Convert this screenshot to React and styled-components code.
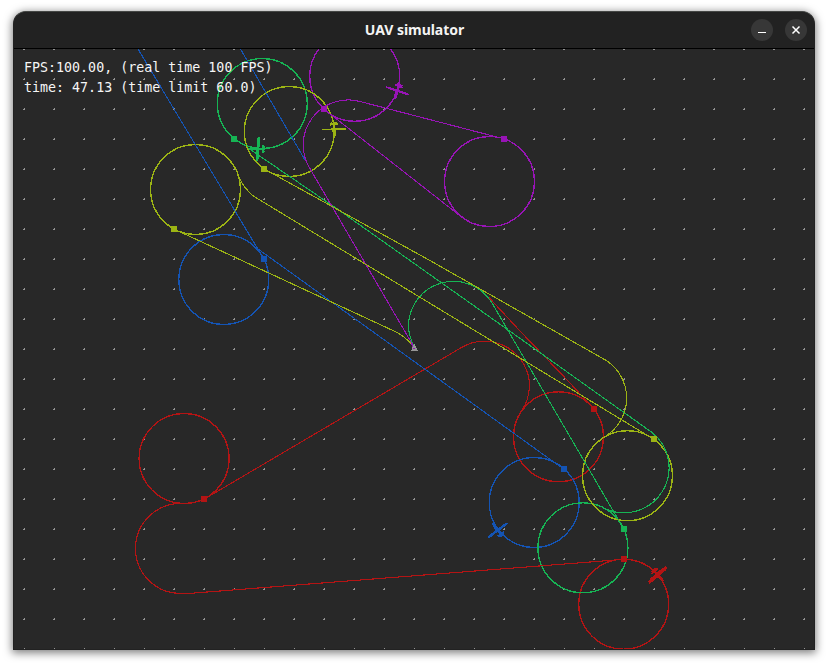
import React from "react";
import styled, { createGlobalStyle } from "styled-components";

const Global = createGlobalStyle`
  * { box-sizing: border-box; }
  body { margin: 0; background: #fff; overflow: hidden; }
`;

const Desktop = styled.main`
  width: 828px;
  height: 666px;
  padding: 11px 13px 16px;
  background: #fff;
`;

const Window = styled.section`
  width: 802px;
  height: 639px;
  display: flex;
  flex-direction: column;
  overflow: hidden;
  border: 1px solid #222;
  border-top-color: #454745;
  border-radius: 13px 13px 0 0;
  background: #282828;
  box-shadow: 0 2px 9px 1px rgba(0, 0, 0, 0.5);
`;

const TitleBar = styled.header`
  height: 37px;
  flex: none;
  display: grid;
  grid-template-columns: 1fr auto 1fr;
  align-items: center;
  padding-right: 7px;
  background: #222;
  border-bottom: 1px solid #000;
`;

const Title = styled.h1`
  grid-column: 2;
  margin: 0 0 0 8px;
  color: #f4f4f4;
  font: 700 14px/20px "Noto Sans", sans-serif;
  letter-spacing: -0.05px;
`;

const Controls = styled.div`
  display: flex;
  justify-content: flex-end;
  gap: 12px;
`;

const ControlButton = styled.button`
  width: 22px;
  height: 22px;
  padding: 0;
  border: 0;
  border-radius: 50%;
  background: #373737;
  svg { display: block; }
`;

const Viewport = styled.div`
  display: grid;
  width: 800px;
  height: 600px;
  flex: none;
  > * { grid-area: 1 / 1; }
`;

const Scene = styled.svg`
  display: block;
  shape-rendering: crispEdges;
`;

const Readout = styled.div`
  padding: 9px 0 0 10px;
  color: #f6f6f6;
  font: 13.3px/20px "DejaVu Sans Mono", monospace;
  letter-spacing: 0.01px;
  white-space: pre;
`;

const C = {
  red: "#b41414",
  blue: "#1454b4",
  green: "#16b454",
  yellow: "#9cb414",
  purple: "#9814b6",
};

const loops = [
  ["red", 184.1, 458.5], ["red", 558.5, 436.8], ["red", 623.7, 604.2],
  ["blue", 223.8, 279.5], ["blue", 534.2, 502.5],
  ["green", 262.3, 103.5], ["green", 582.9, 547.8],
  ["purple", 354.7, 76.3], ["purple", 489.5, 181.5],
  ["yellow", 289.3, 131.5], ["yellow", 195.5, 189.5], ["yellow", 627.5, 475.7],
];

const routes = [
  ["red", "M207 497.5L462 347.2A45 45 0 0 1 529.5 386Q529 400 521.5 411M489 297.5L520 331L570 383L592 407M184 503.5H180.5A45 45 0 0 0 180.5 593.5H188L622 559.5"],
  ["blue", "M138 49L262 256M240.5 49L305 160M256 247.5L553 461.5L564 469"],
  ["green", "M248 148L338 209.5L410 260.5L523 340.5L652 432.5A45 45 0 0 1 606 509M622 526L492 303A45 45 0 0 0 408.5 326.5Q409 336 414 347"],
  ["purple", "M327 111.5L459 215M493 136L359.7 101.4A45 45 0 0 0 309.3 167.5L414 347"],
  ["yellow", "M267 170.5L429 260L606 360.3A45 45 0 0 1 604.6 436.8M650 437L253.3 196Q244 188 240 179M176 230L394 331Q405 336 414 347"],
];

const waypoints = [
  ["red", 204, 499], ["red", 594, 409], ["red", 624, 559],
  ["blue", 264, 259], ["blue", 564, 469],
  ["green", 234, 139], ["green", 624, 529],
  ["purple", 324, 109], ["purple", 504, 139],
  ["yellow", 174, 229], ["yellow", 264, 169], ["yellow", 654, 439],
];

const planes = [
  ["yellow", 334, 129, -2, 1.8], ["green", 258.3, 149, 93, 2.8], ["purple", 397.5, 90.5, 19, 2.2],
  ["blue", 498, 530.5, 143, 2.4], ["red", 657.5, 574.5, -41, 4],
];

function Plane({ color, x, y, angle, weight }) {
  return (
    <g transform={`translate(${x} ${y}) rotate(${angle})`} fill="none" stroke={C[color]}>
      <path d="M-12 .3H12" strokeWidth={weight * 0.75} />
      <path d="M-9 .3H9" strokeWidth={weight} />
      <path d="M-4 -4.5H4M-3 -6.5L0 -4L3 -6.5" strokeWidth="1.8" />
      <path d="M0 -7V9" strokeWidth="2" />
      <path d="M0 -1V7" strokeWidth="3.2" />
    </g>
  );
}

export default function App() {
  return (
    <>
      <Global />
      <Desktop>
        <Window>
          <TitleBar>
            <Title>UAV simulator</Title>
            <Controls>
              <ControlButton aria-label="Minimize">
                <svg width="22" height="22"><path d="M7 13.5H15" stroke="#fff" /></svg>
              </ControlButton>
              <ControlButton aria-label="Close">
                <svg width="22" height="22"><path d="M7.5 7.5L14.5 14.5M14.5 7.5L7.5 14.5" stroke="#fff" strokeWidth="1.5" /></svg>
              </ControlButton>
            </Controls>
          </TitleBar>
          <Viewport>
            <Scene width="800" height="600" viewBox="14 49 800 600">
              <defs>
                <pattern id="grid" x="23" y="48" width="30" height="30" patternUnits="userSpaceOnUse">
                  <path d="M0 1H1V0H2V2H0Z" fill="#969696" />
                </pattern>
              </defs>
              <rect x="14" y="49" width="800" height="600" fill="#282828" />
              <rect x="14" y="49" width="800" height="600" fill="url(#grid)" />
              {loops.map(([c, x, y], i) => <circle key={i} cx={x} cy={y} r="45" fill="none" stroke={C[c]} strokeWidth="1.3" />)}
              {routes.map(([c, d]) => <path key={c} d={d} fill="none" stroke={C[c]} strokeWidth="1.1" />)}
              {waypoints.map(([c, x, y], i) => <rect key={i} x={x - 3} y={y - 3} width="6" height="6" fill={C[c]} />)}
              {planes.map(([c, x, y, a, w]) => <Plane key={c} color={c} x={x} y={y} angle={a} weight={w} />)}
              <path d="M414 343.5L418 351H411Z" fill="#969696" />
              <path d="M411 343L413.5 347.5" stroke={C.purple} />
              <rect x="413" y="348" width="2" height="1" fill={C.purple} />
            </Scene>
            <Readout>{"FPS:100.00, (real time 100 FPS)\ntime: 47.13 (time limit 60.0)"}</Readout>
          </Viewport>
        </Window>
      </Desktop>
    </>
  );
}
